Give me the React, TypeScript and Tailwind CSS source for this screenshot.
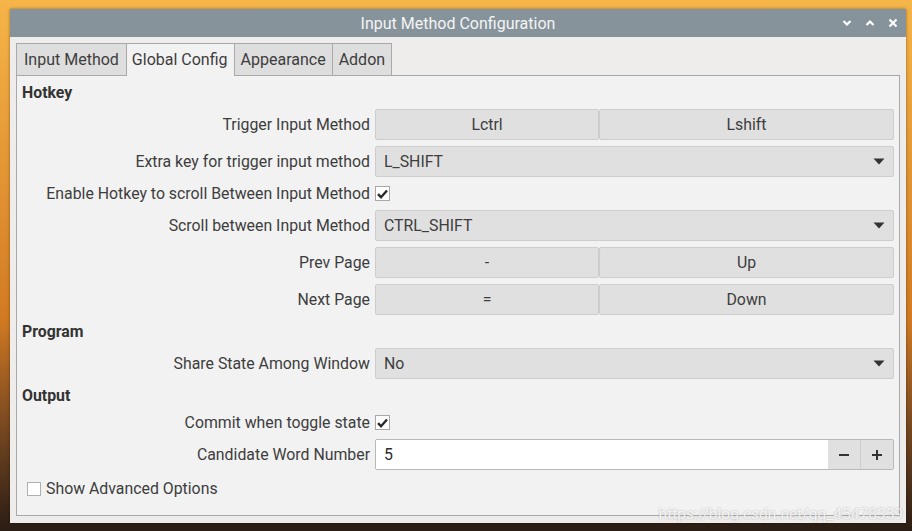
import React from "react";

const font = { fontFamily: "Roboto, 'Noto Sans', sans-serif" };

function Arrow() {
  return (
    <svg width="12" height="7" viewBox="0 0 12 7" className="mr-[8px]">
      <path d="M0.5 0.5 L11.5 0.5 L6 6.5 Z" fill="#333" />
    </svg>
  );
}

function Check() {
  return (
    <div className="w-[15px] h-[15px] bg-white border border-[#a8a8a8] flex items-center justify-center">
      <svg width="11" height="10" viewBox="0 0 11 10">
        <path d="M1 5.2 L4 8.2 L10 1.5" fill="none" stroke="#2b2b2b" strokeWidth="2.4" strokeLinejoin="miter" />
      </svg>
    </div>
  );
}

function Label({ children }: { children: React.ReactNode }) {
  return <div className="text-right text-[15.85px] text-[#3d3d3d] leading-none">{children}</div>;
}

function Btn({ children, className = "" }: { children: React.ReactNode; className?: string }) {
  return (
    <div
      className={`h-[31px] bg-[#e0e0e0] border border-[#cdcdcd] rounded-[2px] flex items-center justify-center text-[15.85px] text-[#3d3d3d] ${className}`}
    >
      {children}
    </div>
  );
}

function Combo({ value }: { value: string }) {
  return (
    <div className="h-[31px] bg-[#e0e0e0] border border-[#cdcdcd] rounded-[2px] flex items-center justify-between pl-[8px] text-[15.85px] text-[#3d3d3d]">
      <span>{value}</span>
      <Arrow />
    </div>
  );
}

function Row({ label, children, h = "h-[31px]" }: { label: string; children: React.ReactNode; h?: string }) {
  return (
    <div className={`grid grid-cols-[348px_1fr] gap-x-[5px] items-center ${h}`}>
      <Label>{label}</Label>
      <div className="flex items-center">{children}</div>
    </div>
  );
}

function Heading({ children }: { children: React.ReactNode }) {
  return <div className="h-[21px] flex items-center font-bold text-[15.85px] text-[#333]">{children}</div>;
}

export default function App() {
  return (
    <div
      style={font}
      className="relative w-[912px] h-[531px] overflow-hidden bg-gradient-to-b from-[#f6b548] via-[#d27a22] via-60% to-[#2b1d14] pt-[9px] pl-[10px]"
    >
      <div className="w-[896px] h-[514px] flex flex-col bg-[#efedec] shadow-[0_0_3px_rgba(0,0,0,0.4)]">
        {/* title bar */}
        <div className="relative h-[28px] bg-[#87939b] flex items-center justify-center pt-[1px] text-[16px] text-[#f4f4f4]">
          <span>Input Method Configuration</span>
          <div className="absolute right-[8px] top-0 h-full flex items-center gap-[13px]">
            <svg width="10" height="8" viewBox="0 0 10 8">
              <path d="M1.5 2 L5 5.5 L8.5 2" fill="none" stroke="#fff" strokeWidth="2.2" />
            </svg>
            <svg width="10" height="8" viewBox="0 0 10 8">
              <path d="M1.5 6 L5 2.5 L8.5 6" fill="none" stroke="#fff" strokeWidth="2.2" />
            </svg>
            <svg width="10" height="10" viewBox="0 0 10 10">
              <path d="M1.5 1.5 L8.5 8.5 M8.5 1.5 L1.5 8.5" fill="none" stroke="#fff" strokeWidth="2.2" />
            </svg>
          </div>
        </div>

        {/* body */}
        <div className="flex-1 flex flex-col px-[6px] pt-[6px] pb-[7px]">
          {/* tabs */}
          <div className="flex h-[32px] text-[16px] text-[#3d3d3d] relative z-10">
            <div className="h-[32px] px-[7px] flex items-center bg-[#dedede] border border-[#a9a9a9] border-b-0">Input Method</div>
            <div className="h-[33px] pl-[5px] pr-[6px] flex items-center bg-[#f2f2f2] border border-[#a9a9a9] border-b-0 border-l-0">Global Config</div>
            <div className="h-[32px] px-[6px] flex items-center bg-[#dedede] border border-[#a9a9a9] border-b-0 border-l-0">Appearance</div>
            <div className="h-[32px] px-[6px] flex items-center bg-[#dedede] border border-[#a9a9a9] border-b-0 border-l-0">Addon</div>
          </div>
          {/* frame */}
          <div className="flex-1 bg-[#f2f2f2] border border-[#a9a9a9] pl-[5px] pr-[5px] pt-[6px] flex flex-col gap-[6px]">
            <Heading>Hotkey</Heading>
            <Row label="Trigger Input Method">
              <Btn className="w-[224px]">Lctrl</Btn>
              <Btn className="flex-1">Lshift</Btn>
            </Row>
            <Row label="Extra key for trigger input method">
              <div className="flex-1">
                <Combo value="L_SHIFT" />
              </div>
            </Row>
            <Row label="Enable Hotkey to scroll Between Input Method" h="h-[21px]">
              <Check />
            </Row>
            <Row label="Scroll between Input Method">
              <div className="flex-1">
                <Combo value="CTRL_SHIFT" />
              </div>
            </Row>
            <Row label="Prev Page">
              <Btn className="w-[224px]">-</Btn>
              <Btn className="flex-1">Up</Btn>
            </Row>
            <Row label="Next Page">
              <Btn className="w-[224px]">=</Btn>
              <Btn className="flex-1">Down</Btn>
            </Row>
            <Heading>Program</Heading>
            <Row label="Share State Among Window">
              <div className="flex-1">
                <Combo value="No" />
              </div>
            </Row>
            <Heading>Output</Heading>
            <Row label="Commit when toggle state" h="h-[21px]">
              <Check />
            </Row>
            <Row label="Candidate Word Number">
              <div className="flex-1 h-[31px] flex border border-[#b8b8b8] rounded-[2px]">
                <div className="flex-1 bg-white flex items-center pl-[8px] text-[15.85px] text-[#2d2d2d]">5</div>
                <div className="w-[33px] bg-[#e0e0e0] flex items-center justify-center border-r border-[#cdcdcd]">
                  <svg width="12" height="12" viewBox="0 0 12 12">
                    <path d="M1 6 L11 6" stroke="#333" strokeWidth="2" />
                  </svg>
                </div>
                <div className="w-[32px] bg-[#e0e0e0] flex items-center justify-center">
                  <svg width="12" height="12" viewBox="0 0 12 12">
                    <path d="M1 6 L11 6 M6 1 L6 11" stroke="#333" strokeWidth="2" />
                  </svg>
                </div>
              </div>
            </Row>
            <div className="h-[25px] flex items-center gap-[5px] pl-[5px] text-[15.85px] text-[#3d3d3d]">
              <div className="w-[14px] h-[14px] bg-white border border-[#b0b0b0]" />
              <span>Show Advanced Options</span>
            </div>
          </div>
        </div>
      </div>
      <div className="absolute right-[9px] top-[503px] text-[15.5px] text-white/80 [text-shadow:0_0_2px_rgba(120,120,120,0.6)]">
        https://blog.csdn.net/qq_45478359
      </div>
    </div>
  );
}
